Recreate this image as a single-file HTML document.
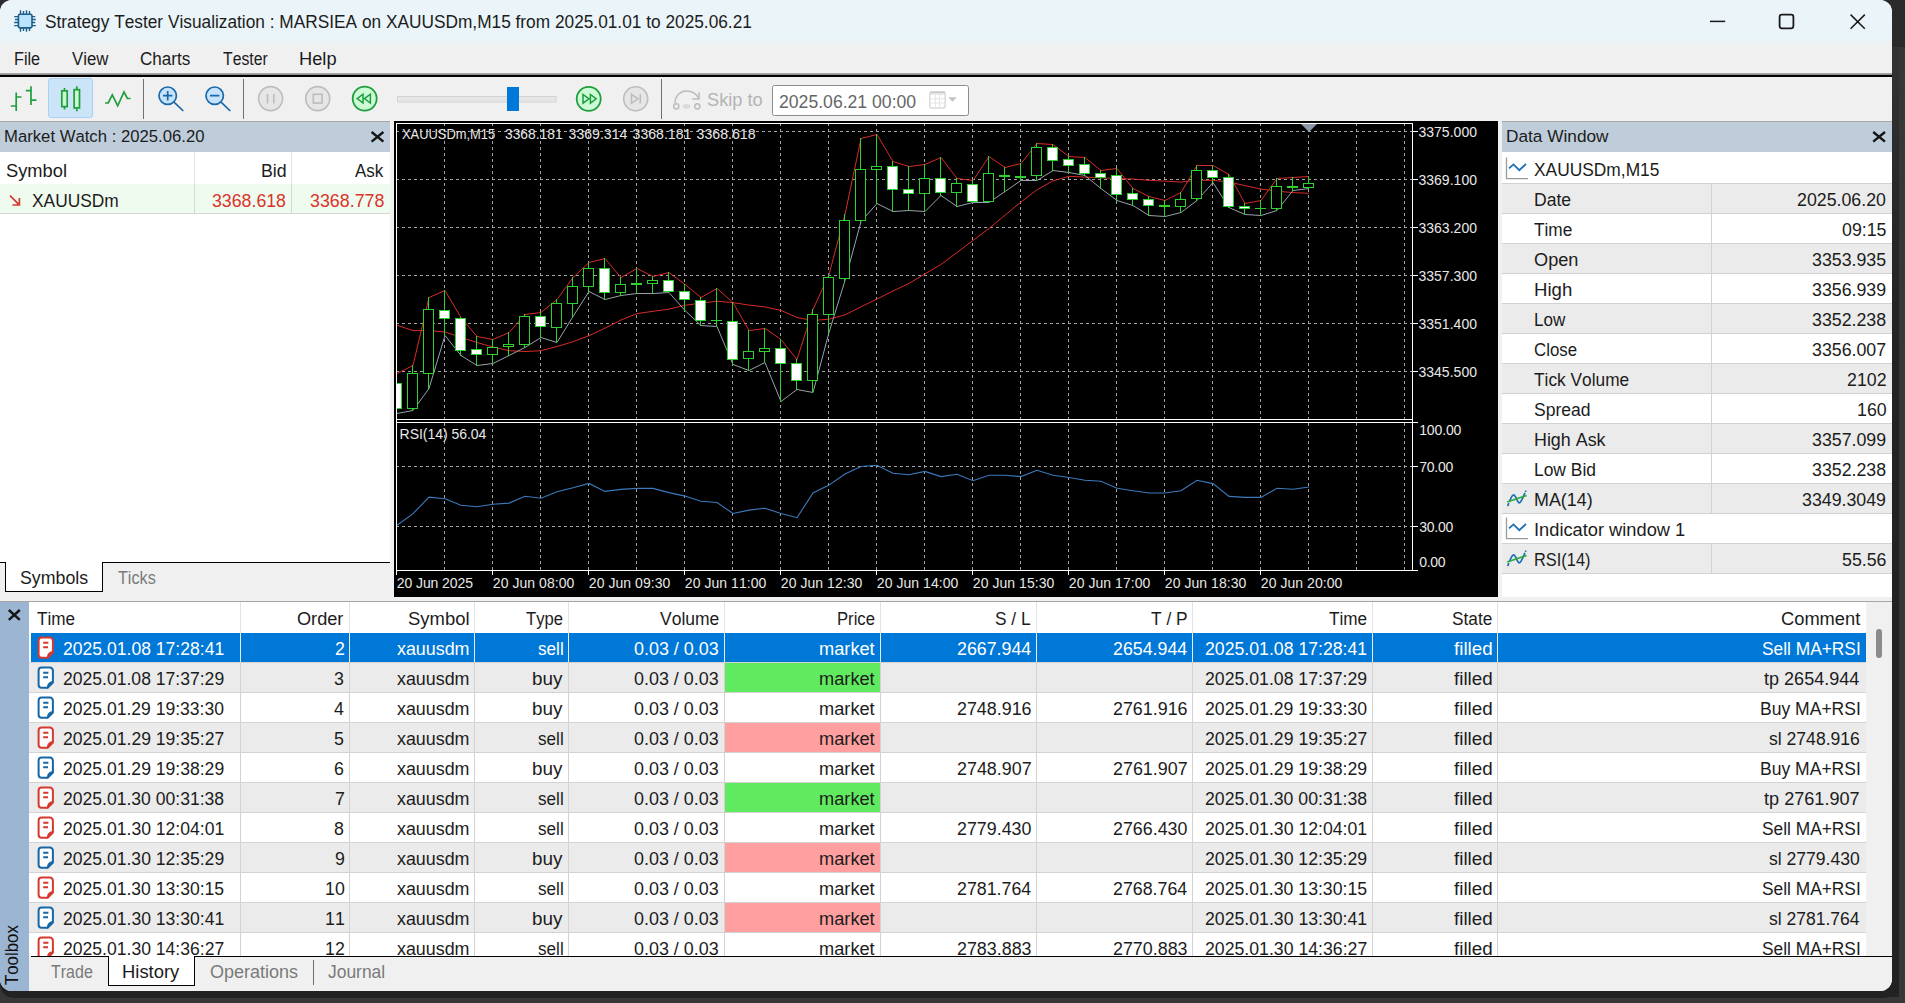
<!DOCTYPE html>
<html lang="en"><head><meta charset="utf-8"><title>Strategy Tester Visualization</title><style>
html,body{margin:0;padding:0}
body{width:1905px;height:1003px;overflow:hidden;background:#373737;position:relative;font-family:"Liberation Sans",sans-serif;font-kerning:none}
.b{position:absolute}
.t{position:absolute;white-space:nowrap;line-height:1;transform-origin:0 0;color:#111}
svg{position:absolute;overflow:visible}
#win{position:absolute;left:0;top:0;width:1892px;height:991px;background:#f0f0f0;border-radius:12px;overflow:hidden}
</style></head><body>
<div class="b" style="left:1880px;top:0px;width:25px;height:47px;background:#2b2b2b;"></div>
<div class="b" style="left:0px;top:47px;width:1905px;height:956px;background:#373737;"></div>
<div class="b" style="left:1885px;top:47px;width:14px;height:950px;background:linear-gradient(#343434 0,#2a2a2a 120px,#232323 300px,#222 100%);"></div>
<div class="b" style="left:0px;top:975px;width:1899px;height:23px;background:#222;border-radius:0 0 16px 14px;"></div>
<div class="b" style="left:0px;top:0px;width:16px;height:16px;background:#2b2b30;"></div>
<div id="win">
<div class="b" style="left:0px;top:0px;width:1892px;height:50px;background:linear-gradient(#ebf4f9 0,#e9f4f9 39px,#f0f0f0 46px);"></div>
<svg style="left:12px;top:8px" width="26" height="26" viewBox="12 8 26 26">
<g stroke="#1b5f8c" stroke-width="1.4" fill="none">
<path d="M20.5 10.2V14M23.5 11V14M26.5 10.2V14M29.5 11V14M20.5 28V31.8M23.5 28V31M26.5 28V31.8M29.5 28V31"/>
<path d="M14.2 16.6H18M15 19.5H18M14.2 22.5H18M14.2 25.6H18M32 16.6H35.2M32 19.5H35.8M32 22.5H35.2M32 25.6H35.8"/>
<rect x="18.4" y="14.3" width="13.6" height="13.6" rx="1.6" fill="#b9e4fb" stroke-width="1.6"/></g></svg>
<span class="t" style="left:45.01px;top:13px;font-size:18.3px;transform:scaleX(0.9452);color:#1c1c1c;">Strategy Tester Visualization : MARSIEA on XAUUSDm,M15 from 2025.01.01 to 2025.06.21</span>
<svg style="left:1700px;top:8px" width="180" height="28" viewBox="1700 8 180 28">
<g stroke="#1a1a1a" stroke-width="1.5" fill="none">
<path d="M1710 21.4H1725.2"/>
<rect x="1779.6" y="14.7" width="13.8" height="13.6" rx="2.2" stroke-width="1.8"/>
<path d="M1850.6 14.6L1864.8 28.8M1864.8 14.6L1850.6 28.8"/></g></svg>
<span class="t" style="left:14.07px;top:50px;font-size:18.3px;transform:scaleX(0.8869);color:#1c1c1c;">File</span>
<span class="t" style="left:72.33px;top:50px;font-size:18.3px;transform:scaleX(0.9185);color:#1c1c1c;">View</span>
<span class="t" style="left:140.23px;top:50px;font-size:18.3px;transform:scaleX(0.9348);color:#1c1c1c;">Charts</span>
<span class="t" style="left:223.25px;top:50px;font-size:18.3px;transform:scaleX(0.8622);color:#1c1c1c;">Tester</span>
<span class="t" style="left:299.20px;top:50px;font-size:18.3px;transform:scaleX(0.9981);color:#1c1c1c;">Help</span>
<div class="b" style="left:0px;top:73px;width:1892px;height:1px;background:#a8a8a8;"></div>
<div class="b" style="left:0px;top:74px;width:1892px;height:1px;background:#8c8c8c;"></div>
<div class="b" style="left:0px;top:75px;width:1892px;height:2px;background:#000;"></div>
<div class="b" style="left:48px;top:78px;width:45px;height:40px;background:#cce4f7;border:1px solid #a9d1f5;border-radius:3px;box-sizing:border-box;"></div>
<svg style="left:0;top:77px" width="1000" height="44" viewBox="0 77 1000 44">
<g fill="none" stroke="#1f9e3d" stroke-width="1.7">
<path d="M16.2 92.4V111M16.2 97H21.5M10.8 106H16.2M31 86.2V105M25.8 90.7H31M31 100.1H36.4"/>
<path d="M64.5 88V90.4M64.5 106.8V109.5M76.8 86.2V89.3M76.8 108.2V111.3"/>
<rect x="61.8" y="90.8" width="5.4" height="15.8" fill="#c9f7cf"/>
<rect x="74.1" y="89.7" width="5.4" height="18.2" fill="#c9f7cf"/>
<path d="M105 103H108.2L112.3 94.9L117.7 105.8L124 92L127.4 98.5H130.5" stroke-linejoin="miter"/>
</g>
<g stroke="#707070" stroke-width="1" shape-rendering="crispEdges"><path d="M143.5 79V119M243.5 79V119M661.5 79V119"/></g>
<g fill="none" stroke="#1b69a8" stroke-width="1.7">
<circle cx="167.7" cy="95.7" r="8.7" fill="#c6e3fb"/><path d="M163 95.7H172.4M167.7 91V100.4M174.3 102.3L183.3 111"/>
<circle cx="214.7" cy="95.7" r="8.7" fill="#c6e3fb"/><path d="M210 95.7H219.4M221.3 102.3L230.3 111"/>
</g>
<g fill="#e6e6e6" stroke="#bdbdbd" stroke-width="1.6">
<circle cx="270.6" cy="98.6" r="12"/><circle cx="317.7" cy="98.6" r="12"/><circle cx="635.7" cy="98.8" r="12"/>
<path d="M267.5 94V103.4M273.8 94V103.4" fill="none"/>
<rect x="313.3" y="94.3" width="8.8" height="8.8" fill="none"/>
<path d="M631.5 94.3L638 98.8L631.5 103.3ZM640.3 94V103.6" fill="none"/>
</g>
<g fill="#ccfbd6" stroke="#1f9e3d" stroke-width="1.8">
<circle cx="364.7" cy="98.6" r="12"/><circle cx="588.7" cy="98.8" r="12"/>
<path d="M357.2 98.6L363 94.2V103ZM364.4 98.6L370.4 94.2V103Z" fill="none" stroke-width="1.5"/>
<path d="M596.2 98.8L590.4 94.4V103.2ZM589 98.8L583 94.4V103.2Z" fill="none" stroke-width="1.5"/>
</g>
<rect x="397.5" y="96.5" width="158.5" height="5.5" fill="#e6e6e6" stroke="#d3d3d3" stroke-width="1"/>
<rect x="507" y="87" width="12" height="24" fill="#0078d7"/>
<g fill="none" stroke="#bcbcbc" stroke-width="1.5">
<path d="M675 103.2C675 95.4 680.6 91 686.5 91C692 91 696.6 94 698.7 98.5"/><path d="M699.1 92.2V98.9H692.2"/>
<circle cx="676.3" cy="106.3" r="2.6"/><circle cx="697.3" cy="106.3" r="2.6"/>
</g>
<ellipse cx="686.5" cy="106.3" rx="3.8" ry="2.4" fill="#dadada"/>
<rect x="772.5" y="85.5" width="196" height="30" rx="2" fill="#fff" stroke="#8c8c8c" stroke-width="1"/>
<rect x="929.9" y="91.9" width="15.2" height="16.1" rx="1" fill="#fff" stroke="#c6c6c6" stroke-width="1"/>
<path d="M930 92.6H945" stroke="#c6c6c6" stroke-width="1.6" fill="none"/>
<path d="M935.3 94.4V107.6M939.6 94.4V107.6M930.4 94.4H944.6M930.4 98.8H944.6M930.4 103H944.6" stroke="#e4e4e4" stroke-width="1" fill="none"/>
<path d="M948.2 97.2L956.8 97.2L952.5 101.7Z" fill="#c2c2c2"/>
</svg>
<span class="t" style="left:706.97px;top:91px;font-size:18.3px;transform:scaleX(0.9973);color:#b4b4b4;">Skip to</span>
<span class="t" style="left:778.81px;top:93px;font-size:18.3px;transform:scaleX(0.9636);color:#666;">2025.06.21 00:00</span>
<div class="b" style="left:0px;top:121px;width:390px;height:31px;background:#bfcddb;border-top:1px solid #a8a8a8;box-sizing:border-box;"></div>
<span class="t" style="left:3.83px;top:129px;font-size:16.8px;transform:scaleX(0.9951);color:#1c1c1c;">Market Watch : 2025.06.20</span>
<svg style="left:370px;top:130px" width="16" height="14" viewBox="370 130 16 14"><path d="M371.6 132L383.4 141.6M383.4 132L371.6 141.6" stroke="#151515" stroke-width="2.4" fill="none"/></svg>
<div class="b" style="left:0px;top:152px;width:390px;height:410px;background:#fff;"></div>
<div class="b" style="left:194px;top:152px;width:1px;height:62px;background:#e2e2e2;"></div>
<div class="b" style="left:291px;top:152px;width:1px;height:62px;background:#e2e2e2;"></div>
<div class="b" style="left:0px;top:184px;width:390px;height:30px;background:#f0fbf0;"></div>
<div class="b" style="left:194px;top:184px;width:1px;height:30px;background:#d0dcd0;"></div>
<div class="b" style="left:291px;top:184px;width:1px;height:30px;background:#d0dcd0;"></div>
<div class="b" style="left:0px;top:213px;width:390px;height:1px;background:#d6d6d6;"></div>
<span class="t" style="left:5.87px;top:162px;font-size:18.3px;transform:scaleX(1.0006);color:#1c1c1c;">Symbol</span>
<span class="t" style="left:260.54px;top:162px;font-size:18.3px;transform:scaleX(0.9719);color:#1c1c1c;">Bid</span>
<span class="t" style="left:355.47px;top:162px;font-size:18.3px;transform:scaleX(0.9280);color:#1c1c1c;">Ask</span>
<svg style="left:8px;top:193px" width="14" height="14" viewBox="8 193 14 14"><path d="M10 195.6L19 204.6M12.4 205H19.4V198" stroke="#d8392e" stroke-width="1.7" fill="none"/></svg>
<span class="t" style="left:31.71px;top:192px;font-size:18.3px;transform:scaleX(0.9489);color:#1c1c1c;">XAUUSDm</span>
<span class="t" style="left:211.82px;top:192px;font-size:18.3px;transform:scaleX(0.9701);color:#d8342a;">3368.618</span>
<span class="t" style="left:310.12px;top:192px;font-size:18.3px;transform:scaleX(0.9755);color:#d8342a;">3368.778</span>
<div class="b" style="left:0px;top:562px;width:390px;height:35px;background:#f0f0f0;"></div>
<div class="b" style="left:103px;top:562px;width:287px;height:1px;background:#000;"></div>
<div class="b" style="left:0px;top:562px;width:5px;height:1px;background:#000;"></div>
<div class="b" style="left:5px;top:562px;width:98px;height:30px;background:#fff;border:1px solid #000;border-top:none;box-sizing:border-box;"></div>
<span class="t" style="left:19.59px;top:569px;font-size:18.3px;transform:scaleX(0.9712);color:#1c1c1c;">Symbols</span>
<span class="t" style="left:118.24px;top:569px;font-size:18.3px;transform:scaleX(0.8842);color:#7a7a7a;">Ticks</span>
<div class="b" style="left:1502px;top:121px;width:390px;height:31px;background:#bfcddb;border-top:1px solid #a8a8a8;box-sizing:border-box;"></div>
<span class="t" style="left:1506.08px;top:129px;font-size:16.8px;transform:scaleX(1.0277);color:#1c1c1c;">Data Window</span>
<svg style="left:1872px;top:130px" width="16" height="14" viewBox="1872 130 16 14"><path d="M1873.2 132L1885 141.6M1885 132L1873.2 141.6" stroke="#151515" stroke-width="2.4" fill="none"/></svg>
<div class="b" style="left:1502px;top:152px;width:390px;height:445px;background:#fff;"></div>
<div class="b" style="left:1502px;top:183px;width:390px;height:1px;background:#d2d2d2;"></div>
<span class="t" style="left:1534.20px;top:161px;font-size:18.3px;transform:scaleX(0.9496);color:#1c1c1c;">XAUUSDm,M15</span>
<svg style="left:1504px;top:156px" width="26" height="26" viewBox="0 0 26 26"><path d="M2.5 1.6V22.7H24" stroke="#9a9a9a" stroke-width="1.3" fill="none"/><path d="M5 12.4L9.5 8.4L15.3 14.2L22 7.9" stroke="#1d6fb4" stroke-width="1.8" fill="none"/></svg>
<div class="b" style="left:1502px;top:184px;width:390px;height:29px;background:#ebebeb;"></div>
<div class="b" style="left:1502px;top:213px;width:390px;height:1px;background:#d2d2d2;"></div>
<div class="b" style="left:1711px;top:184px;width:1px;height:29px;background:#d2d2d2;"></div>
<span class="t" style="left:1534.20px;top:191px;font-size:18.3px;transform:scaleX(0.9619);color:#1c1c1c;">Date</span>
<span class="t" style="left:1797.17px;top:191px;font-size:18.3px;transform:scaleX(0.9720);color:#1c1c1c;">2025.06.20</span>
<div class="b" style="left:1502px;top:243px;width:390px;height:1px;background:#d2d2d2;"></div>
<div class="b" style="left:1711px;top:214px;width:1px;height:29px;background:#d2d2d2;"></div>
<span class="t" style="left:1534.20px;top:221px;font-size:18.3px;transform:scaleX(0.9435);color:#1c1c1c;">Time</span>
<span class="t" style="left:1841.73px;top:221px;font-size:18.3px;transform:scaleX(0.9720);color:#1c1c1c;">09:15</span>
<div class="b" style="left:1502px;top:244px;width:390px;height:29px;background:#ebebeb;"></div>
<div class="b" style="left:1502px;top:273px;width:390px;height:1px;background:#d2d2d2;"></div>
<div class="b" style="left:1711px;top:244px;width:1px;height:29px;background:#d2d2d2;"></div>
<span class="t" style="left:1534.20px;top:251px;font-size:18.3px;transform:scaleX(0.9936);color:#1c1c1c;">Open</span>
<span class="t" style="left:1812.06px;top:251px;font-size:18.3px;transform:scaleX(0.9720);color:#1c1c1c;">3353.935</span>
<div class="b" style="left:1502px;top:303px;width:390px;height:1px;background:#d2d2d2;"></div>
<div class="b" style="left:1711px;top:274px;width:1px;height:29px;background:#d2d2d2;"></div>
<span class="t" style="left:1534.20px;top:281px;font-size:18.3px;transform:scaleX(1.0179);color:#1c1c1c;">High</span>
<span class="t" style="left:1812.15px;top:281px;font-size:18.3px;transform:scaleX(0.9720);color:#1c1c1c;">3356.939</span>
<div class="b" style="left:1502px;top:304px;width:390px;height:29px;background:#ebebeb;"></div>
<div class="b" style="left:1502px;top:333px;width:390px;height:1px;background:#d2d2d2;"></div>
<div class="b" style="left:1711px;top:304px;width:1px;height:29px;background:#d2d2d2;"></div>
<span class="t" style="left:1534.20px;top:311px;font-size:18.3px;transform:scaleX(0.9341);color:#1c1c1c;">Low</span>
<span class="t" style="left:1812.08px;top:311px;font-size:18.3px;transform:scaleX(0.9720);color:#1c1c1c;">3352.238</span>
<div class="b" style="left:1502px;top:363px;width:390px;height:1px;background:#d2d2d2;"></div>
<div class="b" style="left:1711px;top:334px;width:1px;height:29px;background:#d2d2d2;"></div>
<span class="t" style="left:1534.20px;top:341px;font-size:18.3px;transform:scaleX(0.9201);color:#1c1c1c;">Close</span>
<span class="t" style="left:1812.20px;top:341px;font-size:18.3px;transform:scaleX(0.9720);color:#1c1c1c;">3356.007</span>
<div class="b" style="left:1502px;top:364px;width:390px;height:29px;background:#ebebeb;"></div>
<div class="b" style="left:1502px;top:393px;width:390px;height:1px;background:#d2d2d2;"></div>
<div class="b" style="left:1711px;top:364px;width:1px;height:29px;background:#d2d2d2;"></div>
<span class="t" style="left:1534.20px;top:371px;font-size:18.3px;transform:scaleX(0.9463);color:#1c1c1c;">Tick Volume</span>
<span class="t" style="left:1846.82px;top:371px;font-size:18.3px;transform:scaleX(0.9720);color:#1c1c1c;">2102</span>
<div class="b" style="left:1502px;top:423px;width:390px;height:1px;background:#d2d2d2;"></div>
<div class="b" style="left:1711px;top:394px;width:1px;height:29px;background:#d2d2d2;"></div>
<span class="t" style="left:1534.20px;top:401px;font-size:18.3px;transform:scaleX(0.9597);color:#1c1c1c;">Spread</span>
<span class="t" style="left:1856.52px;top:401px;font-size:18.3px;transform:scaleX(0.9720);color:#1c1c1c;">160</span>
<div class="b" style="left:1502px;top:424px;width:390px;height:29px;background:#ebebeb;"></div>
<div class="b" style="left:1502px;top:453px;width:390px;height:1px;background:#d2d2d2;"></div>
<div class="b" style="left:1711px;top:424px;width:1px;height:29px;background:#d2d2d2;"></div>
<span class="t" style="left:1534.20px;top:431px;font-size:18.3px;transform:scaleX(0.9774);color:#1c1c1c;">High Ask</span>
<span class="t" style="left:1812.15px;top:431px;font-size:18.3px;transform:scaleX(0.9720);color:#1c1c1c;">3357.099</span>
<div class="b" style="left:1502px;top:483px;width:390px;height:1px;background:#d2d2d2;"></div>
<div class="b" style="left:1711px;top:454px;width:1px;height:29px;background:#d2d2d2;"></div>
<span class="t" style="left:1534.20px;top:461px;font-size:18.3px;transform:scaleX(0.9527);color:#1c1c1c;">Low Bid</span>
<span class="t" style="left:1812.08px;top:461px;font-size:18.3px;transform:scaleX(0.9720);color:#1c1c1c;">3352.238</span>
<div class="b" style="left:1502px;top:484px;width:390px;height:29px;background:#ebebeb;"></div>
<div class="b" style="left:1502px;top:513px;width:390px;height:1px;background:#d2d2d2;"></div>
<div class="b" style="left:1711px;top:484px;width:1px;height:29px;background:#d2d2d2;"></div>
<span class="t" style="left:1534.20px;top:491px;font-size:18.3px;transform:scaleX(0.9786);color:#1c1c1c;">MA(14)</span>
<span class="t" style="left:1802.26px;top:491px;font-size:18.3px;transform:scaleX(0.9720);color:#1c1c1c;">3349.3049</span>
<svg style="left:1506px;top:488px" width="24" height="22" viewBox="0 0 24 22"><path d="M1.6 18C3.6 14 5.4 6.8 7.6 6.8C10 6.8 11 14.8 13.3 14.8C15.6 14.8 17.6 7 20 2.7" stroke="#1d6fb4" stroke-width="1.7" fill="none" stroke-dasharray="3.2 1.2 30 1.2 3.2"/><path d="M1.2 14.1L20.6 7.4" stroke="#2dab3f" stroke-width="1.6" fill="none"/></svg>
<div class="b" style="left:1502px;top:543px;width:390px;height:1px;background:#d2d2d2;"></div>
<span class="t" style="left:1534.20px;top:521px;font-size:18.3px;transform:scaleX(0.9989);color:#1c1c1c;">Indicator window 1</span>
<svg style="left:1504px;top:516px" width="26" height="26" viewBox="0 0 26 26"><path d="M2.5 1.6V22.7H24" stroke="#9a9a9a" stroke-width="1.3" fill="none"/><path d="M5 12.4L9.5 8.4L15.3 14.2L22 7.9" stroke="#1d6fb4" stroke-width="1.8" fill="none"/></svg>
<div class="b" style="left:1502px;top:544px;width:390px;height:29px;background:#ebebeb;"></div>
<div class="b" style="left:1502px;top:573px;width:390px;height:1px;background:#d2d2d2;"></div>
<div class="b" style="left:1711px;top:544px;width:1px;height:29px;background:#d2d2d2;"></div>
<span class="t" style="left:1534.20px;top:551px;font-size:18.3px;transform:scaleX(0.8964);color:#1c1c1c;">RSI(14)</span>
<span class="t" style="left:1841.77px;top:551px;font-size:18.3px;transform:scaleX(0.9720);color:#1c1c1c;">55.56</span>
<svg style="left:1506px;top:548px" width="24" height="22" viewBox="0 0 24 22"><path d="M1.6 18C3.6 14 5.4 6.8 7.6 6.8C10 6.8 11 14.8 13.3 14.8C15.6 14.8 17.6 7 20 2.7" stroke="#1d6fb4" stroke-width="1.7" fill="none" stroke-dasharray="3.2 1.2 30 1.2 3.2"/><path d="M1.2 14.1L20.6 7.4" stroke="#2dab3f" stroke-width="1.6" fill="none"/></svg>
<svg style="left:394px;top:121px" width="1104" height="476" viewBox="394 121 1104 476"><rect x="394" y="121" width="1104" height="476" fill="#000"/><path d="M444.5 123V419M444.5 423V570M492.5 123V419M492.5 423V570M540.5 123V419M540.5 423V570M588.5 123V419M588.5 423V570M636.5 123V419M636.5 423V570M684.5 123V419M684.5 423V570M732.5 123V419M732.5 423V570M780.5 123V419M780.5 423V570M828.5 123V419M828.5 423V570M876.5 123V419M876.5 423V570M924.5 123V419M924.5 423V570M972.5 123V419M972.5 423V570M1020.5 123V419M1020.5 423V570M1068.5 123V419M1068.5 423V570M1116.5 123V419M1116.5 423V570M1164.5 123V419M1164.5 423V570M1212.5 123V419M1212.5 423V570M1260.5 123V419M1260.5 423V570M1308.5 123V419M1308.5 423V570M1356.5 123V419M1356.5 423V570M1404.5 123V419M1404.5 423V570M396 131.5H1412M396 179.5H1412M396 227.5H1412M396 275.5H1412M396 323.5H1412M396 371.5H1412M396 466.5H1412M396 526.5H1412" stroke="#a2a2a2" stroke-width="1" stroke-dasharray="3 3" fill="none" shape-rendering="crispEdges"/><svg x="397" y="124" width="1015" height="295" viewBox="397 124 1015 295" style="overflow:hidden;position:static"><g fill="none" stroke-width="1"><polyline points="397.0,325.3 413.0,330.6 429.0,330.6 445.0,332.0 461.0,337.3 477.0,342.5 493.0,347.0 509.0,350.7 525.0,351.5 541.0,350.7 557.0,346.5 573.0,341.7 589.0,335.7 605.0,328.2 621.0,320.0 637.0,313.6 653.0,311.3 669.0,309.1 685.0,305.3 701.0,303.1 717.0,301.2 733.0,302.6 749.0,305.1 765.0,306.9 781.0,310.4 797.0,317.5 813.0,320.5 829.0,319.2 845.0,314.9 861.0,306.8 877.0,299.0 893.0,291.0 909.0,283.4 925.0,273.9 941.0,264.5 957.0,252.5 973.0,240.5 989.0,228.4 1005.0,215.2 1021.0,202.0 1037.0,189.8 1053.0,180.8 1069.0,176.3 1085.0,177.1 1101.0,177.8 1117.0,178.6 1133.0,179.0 1149.0,180.3 1165.0,181.1 1181.0,182.1 1197.0,180.3 1213.0,180.3 1229.0,182.1 1245.0,185.6 1261.0,189.1 1277.0,191.2 1293.0,192.6 1309.0,193.3" stroke="#d92a2a"/><polyline points="397.0,413.5 413.0,410.5 429.0,388.5 445.0,335.5 461.0,355.5 477.0,365.5 493.0,363.5 509.0,355.5 525.0,347.5 541.0,337.5 557.0,342.5 573.0,316.5 589.0,291.5 605.0,299.5 621.0,295.5 637.0,293.5 653.0,293.5 669.0,292.5 685.0,310.5 701.0,325.5 717.0,326.5 733.0,364.5 749.0,370.5 765.0,362.5 781.0,401.5 797.0,389.5 813.0,392.5 829.0,332.5 845.0,280.5 861.0,221.5 877.0,203.5 893.0,211.5 909.0,210.5 925.0,211.5 941.0,195.5 957.0,206.5 973.0,202.5 989.0,202.5 1005.0,191.5 1021.0,180.5 1037.0,180.5 1053.0,170.5 1069.0,172.5 1085.0,175.5 1101.0,188.5 1117.0,200.5 1133.0,205.5 1149.0,215.5 1165.0,216.5 1181.0,212.5 1197.0,200.5 1213.0,182.5 1229.0,207.5 1245.0,214.5 1261.0,215.5 1277.0,210.5 1293.0,190.5 1309.0,188.5" stroke="#98a2ac"/><polyline points="397.0,373.5 413.0,365.5 429.0,297.5 445.0,290.5 461.0,317.5 477.0,336.5 493.0,339.5 509.0,332.5 525.0,314.5 541.0,312.5 557.0,299.5 573.0,277.5 589.0,262.5 605.0,258.5 621.0,277.5 637.0,268.5 653.0,276.5 669.0,272.5 685.0,284.5 701.0,297.5 717.0,288.5 733.0,302.5 749.0,330.5 765.0,328.5 781.0,339.5 797.0,359.5 813.0,309.5 829.0,274.5 845.0,214.5 861.0,138.5 877.0,134.5 893.0,161.5 909.0,166.5 925.0,164.5 941.0,157.5 957.0,178.5 973.0,180.5 989.0,156.5 1005.0,167.5 1021.0,163.5 1037.0,143.5 1053.0,144.5 1069.0,156.5 1085.0,157.5 1101.0,170.5 1117.0,168.5 1133.0,188.5 1149.0,196.5 1165.0,200.5 1181.0,192.5 1197.0,165.5 1213.0,165.5 1229.0,174.5 1245.0,203.5 1261.0,200.5 1277.0,178.5 1293.0,177.5 1309.0,176.5" stroke="#d92a2a"/></g><g fill="none" stroke-width="1" shape-rendering="crispEdges"><path d="M396.5 373V383M396.5 409V414M412.5 365V373M412.5 409V411M428.5 297V309M428.5 374V389M444.5 290V310M444.5 319V336M460.5 317V318M460.5 351V356M476.5 336V349M476.5 355V366M492.5 339V347M492.5 355V364M508.5 332V344M508.5 347V356M524.5 314V316M524.5 345V348M540.5 312V316M540.5 327V338M556.5 299V303M556.5 328V343M572.5 277V286M572.5 304V317M588.5 262V268M588.5 287V292M604.5 258V268M604.5 293V300M620.5 277V284M620.5 293V296M636.5 268V294M631 283.5H642M631 284.5H642M652.5 276V280M652.5 284V294M668.5 272V280M668.5 292V293M684.5 284V291M684.5 300V311M700.5 297V300M700.5 321V326M716.5 288V327M711 320.5H722M732.5 302V321M732.5 360V365M748.5 330V351M748.5 359V371M764.5 328V348M764.5 352V363M780.5 339V348M780.5 364V402M796.5 359V363M796.5 381V390M812.5 309V314M812.5 381V393M828.5 274V277M828.5 315V333M844.5 214V220M844.5 279V281M860.5 138V169M860.5 221V222M876.5 134V166M876.5 170V204M892.5 161V166M892.5 190V212M908.5 166V189M908.5 194V211M924.5 164V178M924.5 194V212M940.5 157V178M940.5 193V196M956.5 178V183M956.5 193V207M972.5 180V184M972.5 202V203M988.5 156V173M988.5 202V203M1004.5 167V192M999 175.5H1010M999 176.5H1010M1020.5 163V181M1015 176.5H1026M1015 177.5H1026M1036.5 143V147M1036.5 176V181M1052.5 144V147M1052.5 161V171M1068.5 156V159M1068.5 166V173M1084.5 157V164M1084.5 174V176M1100.5 170V173M1100.5 178V189M1116.5 168V175M1116.5 195V201M1132.5 188V193M1132.5 200V206M1148.5 196V199M1148.5 206V216M1164.5 200V217M1159 205.5H1170M1159 206.5H1170M1180.5 192V199M1180.5 207V213M1196.5 165V170M1196.5 199V201M1212.5 165V170M1212.5 178V183M1228.5 174V177M1228.5 207V208M1244.5 203V206M1244.5 209V215M1260.5 200V216M1255 208.5H1266M1276.5 178V186M1276.5 209V211M1292.5 177V191M1287 186.5H1298M1287 187.5H1298M1308.5 176V183M1308.5 188V189" stroke="#2ed22e"/><g stroke="#2ed22e" fill="#000"><rect x="407.5" y="373.5" width="10" height="35"/><rect x="423.5" y="309.5" width="10" height="64"/><rect x="487.5" y="347.5" width="10" height="7"/><rect x="503.5" y="344.5" width="10" height="2"/><rect x="519.5" y="316.5" width="10" height="28"/><rect x="551.5" y="303.5" width="10" height="24"/><rect x="567.5" y="286.5" width="10" height="17"/><rect x="583.5" y="268.5" width="10" height="18"/><rect x="615.5" y="284.5" width="10" height="8"/><rect x="647.5" y="280.5" width="10" height="3"/><rect x="743.5" y="351.5" width="10" height="7"/><rect x="759.5" y="348.5" width="10" height="3"/><rect x="807.5" y="314.5" width="10" height="66"/><rect x="823.5" y="277.5" width="10" height="37"/><rect x="839.5" y="220.5" width="10" height="58"/><rect x="855.5" y="169.5" width="10" height="51"/><rect x="871.5" y="166.5" width="10" height="3"/><rect x="919.5" y="178.5" width="10" height="15"/><rect x="951.5" y="183.5" width="10" height="9"/><rect x="983.5" y="173.5" width="10" height="28"/><rect x="1031.5" y="147.5" width="10" height="28"/><rect x="1175.5" y="199.5" width="10" height="7"/><rect x="1191.5" y="170.5" width="10" height="28"/><rect x="1271.5" y="186.5" width="10" height="22"/><rect x="1303.5" y="183.5" width="10" height="4"/></g><g stroke="#2ed22e" fill="#fff"><rect x="391.5" y="383.5" width="10" height="25"/><rect x="439.5" y="310.5" width="10" height="8"/><rect x="455.5" y="318.5" width="10" height="32"/><rect x="471.5" y="349.5" width="10" height="5"/><rect x="535.5" y="316.5" width="10" height="10"/><rect x="599.5" y="268.5" width="10" height="24"/><rect x="663.5" y="280.5" width="10" height="11"/><rect x="679.5" y="291.5" width="10" height="8"/><rect x="695.5" y="300.5" width="10" height="20"/><rect x="727.5" y="321.5" width="10" height="38"/><rect x="775.5" y="348.5" width="10" height="15"/><rect x="791.5" y="363.5" width="10" height="17"/><rect x="887.5" y="166.5" width="10" height="23"/><rect x="903.5" y="189.5" width="10" height="4"/><rect x="935.5" y="178.5" width="10" height="14"/><rect x="967.5" y="184.5" width="10" height="17"/><rect x="1047.5" y="147.5" width="10" height="13"/><rect x="1063.5" y="159.5" width="10" height="6"/><rect x="1079.5" y="164.5" width="10" height="9"/><rect x="1095.5" y="173.5" width="10" height="4"/><rect x="1111.5" y="175.5" width="10" height="19"/><rect x="1127.5" y="193.5" width="10" height="6"/><rect x="1143.5" y="199.5" width="10" height="6"/><rect x="1207.5" y="170.5" width="10" height="7"/><rect x="1223.5" y="177.5" width="10" height="29"/><rect x="1239.5" y="206.5" width="10" height="2"/></g></g></svg><svg x="397" y="423" width="1015" height="147" viewBox="397 423 1015 147" style="overflow:hidden;position:static"><polyline points="397.0,525.3 413.0,513.7 429.0,497.1 445.0,498.7 461.0,505.3 477.0,506.7 493.0,504.3 509.0,503.1 525.0,496.3 541.0,498.3 557.0,491.8 573.0,487.8 589.0,483.4 605.0,491.4 621.0,489.4 637.0,488.4 653.0,488.4 669.0,492.6 685.0,496.1 701.0,501.2 717.0,502.5 733.0,513.5 749.0,510.1 765.0,508.2 781.0,513.5 797.0,517.7 813.0,493.0 829.0,485.1 845.0,474.1 861.0,466.5 877.0,465.2 893.0,473.3 909.0,474.7 925.0,471.4 941.0,476.6 957.0,474.3 973.0,480.7 989.0,475.2 1005.0,475.2 1021.0,476.6 1037.0,470.3 1053.0,475.2 1069.0,477.5 1085.0,480.3 1101.0,481.3 1117.0,488.3 1133.0,490.8 1149.0,493.0 1165.0,493.0 1181.0,490.8 1197.0,480.3 1213.0,483.6 1229.0,496.4 1245.0,497.4 1261.0,497.4 1277.0,488.3 1293.0,489.2 1309.0,487.0" fill="none" stroke="#3b7abc" stroke-width="1.1"/></svg><path d="M1301 124H1317L1309 132Z" fill="#8a97a8"/><path d="M396.5 123V571M1412.5 123V571M396 123.5H1413M396 419.5H1413M396 422.5H1418M396 570.5H1418M1413 131.5H1418M1413 179.5H1418M1413 227.5H1418M1413 275.5H1418M1413 323.5H1418M1413 371.5H1418M1413 466.5H1418M1413 526.5H1418M396.5 571V575M492.5 571V575M588.5 571V575M684.5 571V575M780.5 571V575M876.5 571V575M972.5 571V575M1068.5 571V575M1164.5 571V575M1260.5 571V575" stroke="#fff" stroke-width="1" fill="none" shape-rendering="crispEdges"/><g fill="#e8e8e8" font-family="'Liberation Sans',sans-serif" font-size="14px"><text x="402" y="139" textLength="93.2" lengthAdjust="spacingAndGlyphs">XAUUSDm,M15</text><text x="505" y="139" textLength="57.6" lengthAdjust="spacingAndGlyphs">3368.181</text><text x="568.6" y="139" textLength="58.7" lengthAdjust="spacingAndGlyphs">3369.314</text><text x="632.6" y="139" textLength="58.7" lengthAdjust="spacingAndGlyphs">3368.181</text><text x="696.5" y="139" textLength="59.1" lengthAdjust="spacingAndGlyphs">3368.618</text><text x="399.6" y="439.3" textLength="86.7">RSI(14) 56.04</text><text x="1418.4" y="136.6" textLength="58.6">3375.000</text><text x="1418.4" y="184.6" textLength="58.6">3369.100</text><text x="1418.4" y="232.6" textLength="58.6">3363.200</text><text x="1418.4" y="280.6" textLength="58.6">3357.300</text><text x="1418.4" y="328.6" textLength="58.6">3351.400</text><text x="1418.4" y="376.6" textLength="58.6">3345.500</text><text x="1419.2" y="435.1" textLength="42.2">100.00</text><text x="1419.2" y="471.6" textLength="34.2">70.00</text><text x="1419.2" y="531.7" textLength="34.2">30.00</text><text x="1419.2" y="566.7" textLength="26.4">0.00</text><text x="396.8" y="587.6" textLength="76.2">20 Jun 2025</text><text x="492.8" y="587.6" textLength="81.6">20 Jun 08:00</text><text x="588.8" y="587.6" textLength="81.6">20 Jun 09:30</text><text x="684.8" y="587.6" textLength="81.6">20 Jun 11:00</text><text x="780.8" y="587.6" textLength="81.6">20 Jun 12:30</text><text x="876.8" y="587.6" textLength="81.6">20 Jun 14:00</text><text x="972.8" y="587.6" textLength="81.6">20 Jun 15:30</text><text x="1068.8" y="587.6" textLength="81.6">20 Jun 17:00</text><text x="1164.8" y="587.6" textLength="81.6">20 Jun 18:30</text><text x="1260.8" y="587.6" textLength="81.6">20 Jun 20:00</text></g></svg>
<div class="b" style="left:0px;top:601px;width:1892px;height:1px;background:#a6a6a6;"></div>
<div class="b" style="left:0px;top:602px;width:29px;height:389px;background:#9bb5d3;"></div>
<div class="b" style="left:29px;top:602px;width:1837px;height:355px;background:#fff;"></div>
<svg style="left:7px;top:608px" width="15" height="14" viewBox="7 608 15 14"><path d="M8.8 610L19.8 619.8M19.8 610L8.8 619.8" stroke="#151515" stroke-width="2.4" fill="none"/></svg>
<span class="t" style="left:37.21px;top:610px;font-size:18.3px;transform:scaleX(0.9381);color:#1c1c1c;">Time</span>
<span class="t" style="left:297.44px;top:610px;font-size:18.3px;transform:scaleX(0.9933);color:#1c1c1c;">Order</span>
<span class="t" style="left:408.26px;top:610px;font-size:18.3px;transform:scaleX(1.0091);color:#1c1c1c;">Symbol</span>
<span class="t" style="left:526.33px;top:610px;font-size:18.3px;transform:scaleX(0.9098);color:#1c1c1c;">Type</span>
<span class="t" style="left:659.72px;top:610px;font-size:18.3px;transform:scaleX(0.9566);color:#1c1c1c;">Volume</span>
<span class="t" style="left:837.43px;top:610px;font-size:18.3px;transform:scaleX(0.9117);color:#1c1c1c;">Price</span>
<span class="t" style="left:995.21px;top:610px;font-size:18.3px;transform:scaleX(0.9476);color:#1c1c1c;">S / L</span>
<span class="t" style="left:1150.81px;top:610px;font-size:18.3px;transform:scaleX(0.9474);color:#1c1c1c;">T / P</span>
<span class="t" style="left:1329.11px;top:610px;font-size:18.3px;transform:scaleX(0.9381);color:#1c1c1c;">Time</span>
<span class="t" style="left:1452.42px;top:610px;font-size:18.3px;transform:scaleX(0.9444);color:#1c1c1c;">State</span>
<span class="t" style="left:1780.57px;top:610px;font-size:18.3px;transform:scaleX(1.0005);color:#1c1c1c;">Comment</span>
<div class="b" style="left:29px;top:633px;width:1837px;height:323px;overflow:hidden">
<div class="b" style="left:-29px;top:-633px;width:0;height:0"><div class="b" style="left:31px;top:633px;width:1835px;height:29px;background:#0078d7;"></div>
<div class="b" style="left:29px;top:662px;width:1837px;height:1px;background:#d3d3d3;"></div>
<span class="t" style="left:62.92px;top:640px;font-size:18.3px;transform:scaleX(0.9609);color:#fff;">2025.01.08 17:28:41</span>
<span class="t" style="left:334.60px;top:640px;font-size:18.3px;transform:scaleX(0.9720);color:#fff;">2</span>
<span class="t" style="left:397.20px;top:640px;font-size:18.3px;transform:scaleX(0.9775);color:#fff;">xauusdm</span>
<span class="t" style="left:538.02px;top:640px;font-size:18.3px;transform:scaleX(0.9368);color:#fff;">sell</span>
<span class="t" style="left:633.90px;top:640px;font-size:18.3px;transform:scaleX(0.9804);color:#fff;">0.03 / 0.03</span>
<span class="t" style="left:819.09px;top:640px;font-size:18.3px;transform:scaleX(0.9967);color:#fff;">market</span>
<span class="t" style="left:956.50px;top:640px;font-size:18.3px;transform:scaleX(0.9737);color:#fff;">2667.944</span>
<span class="t" style="left:1112.70px;top:640px;font-size:18.3px;transform:scaleX(0.9737);color:#fff;">2654.944</span>
<span class="t" style="left:1205.01px;top:640px;font-size:18.3px;transform:scaleX(0.9669);color:#fff;">2025.01.08 17:28:41</span>
<span class="t" style="left:1454.43px;top:640px;font-size:18.3px;transform:scaleX(1.0304);color:#fff;">filled</span>
<span class="t" style="left:1762.11px;top:640px;font-size:18.3px;transform:scaleX(0.9477);color:#fff;">Sell MA+RSI</span>
<svg style="left:36px;top:633px" width="20" height="30" viewBox="36 633 20 30"><path d="M41.6 637.6H49.9a3 3 0 0 1 3 3V652.6L47.7 657.8H41.6a3 3 0 0 1 -3 -3V640.6a3 3 0 0 1 3 -3Z" fill="#fff" stroke="#d63a2f" stroke-width="2"/><path d="M54 651.1C49 651.4 46.9 653.6 46.7 658.9Z" fill="#d63a2f"/><path d="M43.2 642.8H48.4M43.2 647.3H48" stroke="#d63a2f" stroke-width="1.9" fill="none"/></svg>
<div class="b" style="left:29px;top:663px;width:1837px;height:29px;background:#ebebeb;"></div>
<div class="b" style="left:29px;top:692px;width:1837px;height:1px;background:#d3d3d3;"></div>
<div class="b" style="left:725px;top:663px;width:155px;height:29px;background:#60ea60;"></div>
<span class="t" style="left:62.92px;top:670px;font-size:18.3px;transform:scaleX(0.9607);color:#1c1c1c;">2025.01.08 17:37:29</span>
<span class="t" style="left:334.49px;top:670px;font-size:18.3px;transform:scaleX(0.9720);color:#1c1c1c;">3</span>
<span class="t" style="left:397.20px;top:670px;font-size:18.3px;transform:scaleX(0.9775);color:#1c1c1c;">xauusdm</span>
<span class="t" style="left:532.18px;top:670px;font-size:18.3px;transform:scaleX(1.0322);color:#1c1c1c;">buy</span>
<span class="t" style="left:633.90px;top:670px;font-size:18.3px;transform:scaleX(0.9804);color:#1c1c1c;">0.03 / 0.03</span>
<span class="t" style="left:819.09px;top:670px;font-size:18.3px;transform:scaleX(0.9967);color:#1c1c1c;">market</span>
<span class="t" style="left:1205.01px;top:670px;font-size:18.3px;transform:scaleX(0.9668);color:#1c1c1c;">2025.01.08 17:37:29</span>
<span class="t" style="left:1454.43px;top:670px;font-size:18.3px;transform:scaleX(1.0304);color:#1c1c1c;">filled</span>
<span class="t" style="left:1764.43px;top:670px;font-size:18.3px;transform:scaleX(0.9869);color:#1c1c1c;">tp 2654.944</span>
<svg style="left:36px;top:663px" width="20" height="30" viewBox="36 663 20 30"><path d="M41.6 667.6H49.9a3 3 0 0 1 3 3V682.6L47.7 687.8H41.6a3 3 0 0 1 -3 -3V670.6a3 3 0 0 1 3 -3Z" fill="#fff" stroke="#1767a6" stroke-width="2"/><path d="M54 681.1C49 681.4 46.9 683.6 46.7 688.9Z" fill="#1767a6"/><path d="M43.2 672.8H48.4M43.2 677.3H48" stroke="#1767a6" stroke-width="1.9" fill="none"/></svg>
<div class="b" style="left:29px;top:722px;width:1837px;height:1px;background:#d3d3d3;"></div>
<span class="t" style="left:62.92px;top:700px;font-size:18.3px;transform:scaleX(0.9599);color:#1c1c1c;">2025.01.29 19:33:30</span>
<span class="t" style="left:334.23px;top:700px;font-size:18.3px;transform:scaleX(0.9720);color:#1c1c1c;">4</span>
<span class="t" style="left:397.20px;top:700px;font-size:18.3px;transform:scaleX(0.9775);color:#1c1c1c;">xauusdm</span>
<span class="t" style="left:532.18px;top:700px;font-size:18.3px;transform:scaleX(1.0322);color:#1c1c1c;">buy</span>
<span class="t" style="left:633.90px;top:700px;font-size:18.3px;transform:scaleX(0.9804);color:#1c1c1c;">0.03 / 0.03</span>
<span class="t" style="left:819.09px;top:700px;font-size:18.3px;transform:scaleX(0.9967);color:#1c1c1c;">market</span>
<span class="t" style="left:956.50px;top:700px;font-size:18.3px;transform:scaleX(0.9772);color:#1c1c1c;">2748.916</span>
<span class="t" style="left:1112.70px;top:700px;font-size:18.3px;transform:scaleX(0.9772);color:#1c1c1c;">2761.916</span>
<span class="t" style="left:1205.01px;top:700px;font-size:18.3px;transform:scaleX(0.9659);color:#1c1c1c;">2025.01.29 19:33:30</span>
<span class="t" style="left:1454.43px;top:700px;font-size:18.3px;transform:scaleX(1.0304);color:#1c1c1c;">filled</span>
<span class="t" style="left:1759.96px;top:700px;font-size:18.3px;transform:scaleX(0.9591);color:#1c1c1c;">Buy MA+RSI</span>
<svg style="left:36px;top:693px" width="20" height="30" viewBox="36 693 20 30"><path d="M41.6 697.6H49.9a3 3 0 0 1 3 3V712.6L47.7 717.8H41.6a3 3 0 0 1 -3 -3V700.6a3 3 0 0 1 3 -3Z" fill="#fff" stroke="#1767a6" stroke-width="2"/><path d="M54 711.1C49 711.4 46.9 713.6 46.7 718.9Z" fill="#1767a6"/><path d="M43.2 702.8H48.4M43.2 707.3H48" stroke="#1767a6" stroke-width="1.9" fill="none"/></svg>
<div class="b" style="left:29px;top:723px;width:1837px;height:29px;background:#ebebeb;"></div>
<div class="b" style="left:29px;top:752px;width:1837px;height:1px;background:#d3d3d3;"></div>
<div class="b" style="left:725px;top:723px;width:155px;height:29px;background:#ff9f9f;"></div>
<span class="t" style="left:62.92px;top:730px;font-size:18.3px;transform:scaleX(0.9611);color:#1c1c1c;">2025.01.29 19:35:27</span>
<span class="t" style="left:334.45px;top:730px;font-size:18.3px;transform:scaleX(0.9720);color:#1c1c1c;">5</span>
<span class="t" style="left:397.20px;top:730px;font-size:18.3px;transform:scaleX(0.9775);color:#1c1c1c;">xauusdm</span>
<span class="t" style="left:538.02px;top:730px;font-size:18.3px;transform:scaleX(0.9368);color:#1c1c1c;">sell</span>
<span class="t" style="left:633.90px;top:730px;font-size:18.3px;transform:scaleX(0.9804);color:#1c1c1c;">0.03 / 0.03</span>
<span class="t" style="left:819.09px;top:730px;font-size:18.3px;transform:scaleX(0.9967);color:#1c1c1c;">market</span>
<span class="t" style="left:1205.01px;top:730px;font-size:18.3px;transform:scaleX(0.9671);color:#1c1c1c;">2025.01.29 19:35:27</span>
<span class="t" style="left:1454.43px;top:730px;font-size:18.3px;transform:scaleX(1.0304);color:#1c1c1c;">filled</span>
<span class="t" style="left:1769.11px;top:730px;font-size:18.3px;transform:scaleX(0.9613);color:#1c1c1c;">sl 2748.916</span>
<svg style="left:36px;top:723px" width="20" height="30" viewBox="36 723 20 30"><path d="M41.6 727.6H49.9a3 3 0 0 1 3 3V742.6L47.7 747.8H41.6a3 3 0 0 1 -3 -3V730.6a3 3 0 0 1 3 -3Z" fill="#fff" stroke="#d63a2f" stroke-width="2"/><path d="M54 741.1C49 741.4 46.9 743.6 46.7 748.9Z" fill="#d63a2f"/><path d="M43.2 732.8H48.4M43.2 737.3H48" stroke="#d63a2f" stroke-width="1.9" fill="none"/></svg>
<div class="b" style="left:29px;top:782px;width:1837px;height:1px;background:#d3d3d3;"></div>
<span class="t" style="left:62.92px;top:760px;font-size:18.3px;transform:scaleX(0.9607);color:#1c1c1c;">2025.01.29 19:38:29</span>
<span class="t" style="left:334.49px;top:760px;font-size:18.3px;transform:scaleX(0.9720);color:#1c1c1c;">6</span>
<span class="t" style="left:397.20px;top:760px;font-size:18.3px;transform:scaleX(0.9775);color:#1c1c1c;">xauusdm</span>
<span class="t" style="left:532.18px;top:760px;font-size:18.3px;transform:scaleX(1.0322);color:#1c1c1c;">buy</span>
<span class="t" style="left:633.90px;top:760px;font-size:18.3px;transform:scaleX(0.9804);color:#1c1c1c;">0.03 / 0.03</span>
<span class="t" style="left:819.09px;top:760px;font-size:18.3px;transform:scaleX(0.9967);color:#1c1c1c;">market</span>
<span class="t" style="left:956.50px;top:760px;font-size:18.3px;transform:scaleX(0.9787);color:#1c1c1c;">2748.907</span>
<span class="t" style="left:1112.70px;top:760px;font-size:18.3px;transform:scaleX(0.9787);color:#1c1c1c;">2761.907</span>
<span class="t" style="left:1205.01px;top:760px;font-size:18.3px;transform:scaleX(0.9668);color:#1c1c1c;">2025.01.29 19:38:29</span>
<span class="t" style="left:1454.43px;top:760px;font-size:18.3px;transform:scaleX(1.0304);color:#1c1c1c;">filled</span>
<span class="t" style="left:1759.96px;top:760px;font-size:18.3px;transform:scaleX(0.9591);color:#1c1c1c;">Buy MA+RSI</span>
<svg style="left:36px;top:753px" width="20" height="30" viewBox="36 753 20 30"><path d="M41.6 757.6H49.9a3 3 0 0 1 3 3V772.6L47.7 777.8H41.6a3 3 0 0 1 -3 -3V760.6a3 3 0 0 1 3 -3Z" fill="#fff" stroke="#1767a6" stroke-width="2"/><path d="M54 771.1C49 771.4 46.9 773.6 46.7 778.9Z" fill="#1767a6"/><path d="M43.2 762.8H48.4M43.2 767.3H48" stroke="#1767a6" stroke-width="1.9" fill="none"/></svg>
<div class="b" style="left:29px;top:783px;width:1837px;height:29px;background:#ebebeb;"></div>
<div class="b" style="left:29px;top:812px;width:1837px;height:1px;background:#d3d3d3;"></div>
<div class="b" style="left:725px;top:783px;width:155px;height:29px;background:#60ea60;"></div>
<span class="t" style="left:62.92px;top:790px;font-size:18.3px;transform:scaleX(0.9603);color:#1c1c1c;">2025.01.30 00:31:38</span>
<span class="t" style="left:334.60px;top:790px;font-size:18.3px;transform:scaleX(0.9720);color:#1c1c1c;">7</span>
<span class="t" style="left:397.20px;top:790px;font-size:18.3px;transform:scaleX(0.9775);color:#1c1c1c;">xauusdm</span>
<span class="t" style="left:538.02px;top:790px;font-size:18.3px;transform:scaleX(0.9368);color:#1c1c1c;">sell</span>
<span class="t" style="left:633.90px;top:790px;font-size:18.3px;transform:scaleX(0.9804);color:#1c1c1c;">0.03 / 0.03</span>
<span class="t" style="left:819.09px;top:790px;font-size:18.3px;transform:scaleX(0.9967);color:#1c1c1c;">market</span>
<span class="t" style="left:1205.01px;top:790px;font-size:18.3px;transform:scaleX(0.9664);color:#1c1c1c;">2025.01.30 00:31:38</span>
<span class="t" style="left:1454.43px;top:790px;font-size:18.3px;transform:scaleX(1.0304);color:#1c1c1c;">filled</span>
<span class="t" style="left:1764.43px;top:790px;font-size:18.3px;transform:scaleX(0.9908);color:#1c1c1c;">tp 2761.907</span>
<svg style="left:36px;top:783px" width="20" height="30" viewBox="36 783 20 30"><path d="M41.6 787.6H49.9a3 3 0 0 1 3 3V802.6L47.7 807.8H41.6a3 3 0 0 1 -3 -3V790.6a3 3 0 0 1 3 -3Z" fill="#fff" stroke="#d63a2f" stroke-width="2"/><path d="M54 801.1C49 801.4 46.9 803.6 46.7 808.9Z" fill="#d63a2f"/><path d="M43.2 792.8H48.4M43.2 797.3H48" stroke="#d63a2f" stroke-width="1.9" fill="none"/></svg>
<div class="b" style="left:29px;top:842px;width:1837px;height:1px;background:#d3d3d3;"></div>
<span class="t" style="left:62.92px;top:820px;font-size:18.3px;transform:scaleX(0.9609);color:#1c1c1c;">2025.01.30 12:04:01</span>
<span class="t" style="left:334.48px;top:820px;font-size:18.3px;transform:scaleX(0.9720);color:#1c1c1c;">8</span>
<span class="t" style="left:397.20px;top:820px;font-size:18.3px;transform:scaleX(0.9775);color:#1c1c1c;">xauusdm</span>
<span class="t" style="left:538.02px;top:820px;font-size:18.3px;transform:scaleX(0.9368);color:#1c1c1c;">sell</span>
<span class="t" style="left:633.90px;top:820px;font-size:18.3px;transform:scaleX(0.9804);color:#1c1c1c;">0.03 / 0.03</span>
<span class="t" style="left:819.09px;top:820px;font-size:18.3px;transform:scaleX(0.9967);color:#1c1c1c;">market</span>
<span class="t" style="left:956.50px;top:820px;font-size:18.3px;transform:scaleX(0.9760);color:#1c1c1c;">2779.430</span>
<span class="t" style="left:1112.70px;top:820px;font-size:18.3px;transform:scaleX(0.9760);color:#1c1c1c;">2766.430</span>
<span class="t" style="left:1205.01px;top:820px;font-size:18.3px;transform:scaleX(0.9669);color:#1c1c1c;">2025.01.30 12:04:01</span>
<span class="t" style="left:1454.43px;top:820px;font-size:18.3px;transform:scaleX(1.0304);color:#1c1c1c;">filled</span>
<span class="t" style="left:1762.11px;top:820px;font-size:18.3px;transform:scaleX(0.9477);color:#1c1c1c;">Sell MA+RSI</span>
<svg style="left:36px;top:813px" width="20" height="30" viewBox="36 813 20 30"><path d="M41.6 817.6H49.9a3 3 0 0 1 3 3V832.6L47.7 837.8H41.6a3 3 0 0 1 -3 -3V820.6a3 3 0 0 1 3 -3Z" fill="#fff" stroke="#d63a2f" stroke-width="2"/><path d="M54 831.1C49 831.4 46.9 833.6 46.7 838.9Z" fill="#d63a2f"/><path d="M43.2 822.8H48.4M43.2 827.3H48" stroke="#d63a2f" stroke-width="1.9" fill="none"/></svg>
<div class="b" style="left:29px;top:843px;width:1837px;height:29px;background:#ebebeb;"></div>
<div class="b" style="left:29px;top:872px;width:1837px;height:1px;background:#d3d3d3;"></div>
<div class="b" style="left:725px;top:843px;width:155px;height:29px;background:#ff9f9f;"></div>
<span class="t" style="left:62.92px;top:850px;font-size:18.3px;transform:scaleX(0.9607);color:#1c1c1c;">2025.01.30 12:35:29</span>
<span class="t" style="left:334.55px;top:850px;font-size:18.3px;transform:scaleX(0.9720);color:#1c1c1c;">9</span>
<span class="t" style="left:397.20px;top:850px;font-size:18.3px;transform:scaleX(0.9775);color:#1c1c1c;">xauusdm</span>
<span class="t" style="left:532.18px;top:850px;font-size:18.3px;transform:scaleX(1.0322);color:#1c1c1c;">buy</span>
<span class="t" style="left:633.90px;top:850px;font-size:18.3px;transform:scaleX(0.9804);color:#1c1c1c;">0.03 / 0.03</span>
<span class="t" style="left:819.09px;top:850px;font-size:18.3px;transform:scaleX(0.9967);color:#1c1c1c;">market</span>
<span class="t" style="left:1205.01px;top:850px;font-size:18.3px;transform:scaleX(0.9668);color:#1c1c1c;">2025.01.30 12:35:29</span>
<span class="t" style="left:1454.43px;top:850px;font-size:18.3px;transform:scaleX(1.0304);color:#1c1c1c;">filled</span>
<span class="t" style="left:1769.11px;top:850px;font-size:18.3px;transform:scaleX(0.9604);color:#1c1c1c;">sl 2779.430</span>
<svg style="left:36px;top:843px" width="20" height="30" viewBox="36 843 20 30"><path d="M41.6 847.6H49.9a3 3 0 0 1 3 3V862.6L47.7 867.8H41.6a3 3 0 0 1 -3 -3V850.6a3 3 0 0 1 3 -3Z" fill="#fff" stroke="#1767a6" stroke-width="2"/><path d="M54 861.1C49 861.4 46.9 863.6 46.7 868.9Z" fill="#1767a6"/><path d="M43.2 852.8H48.4M43.2 857.3H48" stroke="#1767a6" stroke-width="1.9" fill="none"/></svg>
<div class="b" style="left:29px;top:902px;width:1837px;height:1px;background:#d3d3d3;"></div>
<span class="t" style="left:62.92px;top:880px;font-size:18.3px;transform:scaleX(0.9602);color:#1c1c1c;">2025.01.30 13:30:15</span>
<span class="t" style="left:324.51px;top:880px;font-size:18.3px;transform:scaleX(0.9720);color:#1c1c1c;">10</span>
<span class="t" style="left:397.20px;top:880px;font-size:18.3px;transform:scaleX(0.9775);color:#1c1c1c;">xauusdm</span>
<span class="t" style="left:538.02px;top:880px;font-size:18.3px;transform:scaleX(0.9368);color:#1c1c1c;">sell</span>
<span class="t" style="left:633.90px;top:880px;font-size:18.3px;transform:scaleX(0.9804);color:#1c1c1c;">0.03 / 0.03</span>
<span class="t" style="left:819.09px;top:880px;font-size:18.3px;transform:scaleX(0.9967);color:#1c1c1c;">market</span>
<span class="t" style="left:956.50px;top:880px;font-size:18.3px;transform:scaleX(0.9737);color:#1c1c1c;">2781.764</span>
<span class="t" style="left:1112.70px;top:880px;font-size:18.3px;transform:scaleX(0.9737);color:#1c1c1c;">2768.764</span>
<span class="t" style="left:1205.01px;top:880px;font-size:18.3px;transform:scaleX(0.9662);color:#1c1c1c;">2025.01.30 13:30:15</span>
<span class="t" style="left:1454.43px;top:880px;font-size:18.3px;transform:scaleX(1.0304);color:#1c1c1c;">filled</span>
<span class="t" style="left:1762.11px;top:880px;font-size:18.3px;transform:scaleX(0.9477);color:#1c1c1c;">Sell MA+RSI</span>
<svg style="left:36px;top:873px" width="20" height="30" viewBox="36 873 20 30"><path d="M41.6 877.6H49.9a3 3 0 0 1 3 3V892.6L47.7 897.8H41.6a3 3 0 0 1 -3 -3V880.6a3 3 0 0 1 3 -3Z" fill="#fff" stroke="#d63a2f" stroke-width="2"/><path d="M54 891.1C49 891.4 46.9 893.6 46.7 898.9Z" fill="#d63a2f"/><path d="M43.2 882.8H48.4M43.2 887.3H48" stroke="#d63a2f" stroke-width="1.9" fill="none"/></svg>
<div class="b" style="left:29px;top:903px;width:1837px;height:29px;background:#ebebeb;"></div>
<div class="b" style="left:29px;top:932px;width:1837px;height:1px;background:#d3d3d3;"></div>
<div class="b" style="left:725px;top:903px;width:155px;height:29px;background:#ff9f9f;"></div>
<span class="t" style="left:62.92px;top:910px;font-size:18.3px;transform:scaleX(0.9609);color:#1c1c1c;">2025.01.30 13:30:41</span>
<span class="t" style="left:324.68px;top:910px;font-size:18.3px;transform:scaleX(0.9720);color:#1c1c1c;">11</span>
<span class="t" style="left:397.20px;top:910px;font-size:18.3px;transform:scaleX(0.9775);color:#1c1c1c;">xauusdm</span>
<span class="t" style="left:532.18px;top:910px;font-size:18.3px;transform:scaleX(1.0322);color:#1c1c1c;">buy</span>
<span class="t" style="left:633.90px;top:910px;font-size:18.3px;transform:scaleX(0.9804);color:#1c1c1c;">0.03 / 0.03</span>
<span class="t" style="left:819.09px;top:910px;font-size:18.3px;transform:scaleX(0.9967);color:#1c1c1c;">market</span>
<span class="t" style="left:1205.01px;top:910px;font-size:18.3px;transform:scaleX(0.9669);color:#1c1c1c;">2025.01.30 13:30:41</span>
<span class="t" style="left:1454.43px;top:910px;font-size:18.3px;transform:scaleX(1.0304);color:#1c1c1c;">filled</span>
<span class="t" style="left:1769.11px;top:910px;font-size:18.3px;transform:scaleX(0.9585);color:#1c1c1c;">sl 2781.764</span>
<svg style="left:36px;top:903px" width="20" height="30" viewBox="36 903 20 30"><path d="M41.6 907.6H49.9a3 3 0 0 1 3 3V922.6L47.7 927.8H41.6a3 3 0 0 1 -3 -3V910.6a3 3 0 0 1 3 -3Z" fill="#fff" stroke="#1767a6" stroke-width="2"/><path d="M54 921.1C49 921.4 46.9 923.6 46.7 928.9Z" fill="#1767a6"/><path d="M43.2 912.8H48.4M43.2 917.3H48" stroke="#1767a6" stroke-width="1.9" fill="none"/></svg>
<div class="b" style="left:29px;top:962px;width:1837px;height:1px;background:#d3d3d3;"></div>
<span class="t" style="left:62.92px;top:940px;font-size:18.3px;transform:scaleX(0.9611);color:#1c1c1c;">2025.01.30 14:36:27</span>
<span class="t" style="left:324.71px;top:940px;font-size:18.3px;transform:scaleX(0.9720);color:#1c1c1c;">12</span>
<span class="t" style="left:397.20px;top:940px;font-size:18.3px;transform:scaleX(0.9775);color:#1c1c1c;">xauusdm</span>
<span class="t" style="left:538.02px;top:940px;font-size:18.3px;transform:scaleX(0.9368);color:#1c1c1c;">sell</span>
<span class="t" style="left:633.90px;top:940px;font-size:18.3px;transform:scaleX(0.9804);color:#1c1c1c;">0.03 / 0.03</span>
<span class="t" style="left:819.09px;top:940px;font-size:18.3px;transform:scaleX(0.9967);color:#1c1c1c;">market</span>
<span class="t" style="left:956.50px;top:940px;font-size:18.3px;transform:scaleX(0.9772);color:#1c1c1c;">2783.883</span>
<span class="t" style="left:1112.70px;top:940px;font-size:18.3px;transform:scaleX(0.9772);color:#1c1c1c;">2770.883</span>
<span class="t" style="left:1205.01px;top:940px;font-size:18.3px;transform:scaleX(0.9671);color:#1c1c1c;">2025.01.30 14:36:27</span>
<span class="t" style="left:1454.43px;top:940px;font-size:18.3px;transform:scaleX(1.0304);color:#1c1c1c;">filled</span>
<span class="t" style="left:1762.11px;top:940px;font-size:18.3px;transform:scaleX(0.9477);color:#1c1c1c;">Sell MA+RSI</span>
<svg style="left:36px;top:933px" width="20" height="30" viewBox="36 933 20 30"><path d="M41.6 937.6H49.9a3 3 0 0 1 3 3V952.6L47.7 957.8H41.6a3 3 0 0 1 -3 -3V940.6a3 3 0 0 1 3 -3Z" fill="#fff" stroke="#d63a2f" stroke-width="2"/><path d="M54 951.1C49 951.4 46.9 953.6 46.7 958.9Z" fill="#d63a2f"/><path d="M43.2 942.8H48.4M43.2 947.3H48" stroke="#d63a2f" stroke-width="1.9" fill="none"/></svg></div></div>
<div class="b" style="left:240px;top:602px;width:1px;height:31px;background:#e3e3e3;"></div>
<div class="b" style="left:240px;top:633px;width:1px;height:323px;background:#d3d3d3;"></div>
<div class="b" style="left:240px;top:633px;width:1px;height:29px;background:rgba(255,255,255,.55);"></div>
<div class="b" style="left:349px;top:602px;width:1px;height:31px;background:#e3e3e3;"></div>
<div class="b" style="left:349px;top:633px;width:1px;height:323px;background:#d3d3d3;"></div>
<div class="b" style="left:349px;top:633px;width:1px;height:29px;background:rgba(255,255,255,.55);"></div>
<div class="b" style="left:474px;top:602px;width:1px;height:31px;background:#e3e3e3;"></div>
<div class="b" style="left:474px;top:633px;width:1px;height:323px;background:#d3d3d3;"></div>
<div class="b" style="left:474px;top:633px;width:1px;height:29px;background:rgba(255,255,255,.55);"></div>
<div class="b" style="left:568px;top:602px;width:1px;height:31px;background:#e3e3e3;"></div>
<div class="b" style="left:568px;top:633px;width:1px;height:323px;background:#d3d3d3;"></div>
<div class="b" style="left:568px;top:633px;width:1px;height:29px;background:rgba(255,255,255,.55);"></div>
<div class="b" style="left:724px;top:602px;width:1px;height:31px;background:#e3e3e3;"></div>
<div class="b" style="left:724px;top:633px;width:1px;height:323px;background:#d3d3d3;"></div>
<div class="b" style="left:724px;top:633px;width:1px;height:29px;background:rgba(255,255,255,.55);"></div>
<div class="b" style="left:880px;top:602px;width:1px;height:31px;background:#e3e3e3;"></div>
<div class="b" style="left:880px;top:633px;width:1px;height:323px;background:#d3d3d3;"></div>
<div class="b" style="left:880px;top:633px;width:1px;height:29px;background:rgba(255,255,255,.55);"></div>
<div class="b" style="left:1036px;top:602px;width:1px;height:31px;background:#e3e3e3;"></div>
<div class="b" style="left:1036px;top:633px;width:1px;height:323px;background:#d3d3d3;"></div>
<div class="b" style="left:1036px;top:633px;width:1px;height:29px;background:rgba(255,255,255,.55);"></div>
<div class="b" style="left:1192px;top:602px;width:1px;height:31px;background:#e3e3e3;"></div>
<div class="b" style="left:1192px;top:633px;width:1px;height:323px;background:#d3d3d3;"></div>
<div class="b" style="left:1192px;top:633px;width:1px;height:29px;background:rgba(255,255,255,.55);"></div>
<div class="b" style="left:1372px;top:602px;width:1px;height:31px;background:#e3e3e3;"></div>
<div class="b" style="left:1372px;top:633px;width:1px;height:323px;background:#d3d3d3;"></div>
<div class="b" style="left:1372px;top:633px;width:1px;height:29px;background:rgba(255,255,255,.55);"></div>
<div class="b" style="left:1497px;top:602px;width:1px;height:31px;background:#e3e3e3;"></div>
<div class="b" style="left:1497px;top:633px;width:1px;height:323px;background:#d3d3d3;"></div>
<div class="b" style="left:1497px;top:633px;width:1px;height:29px;background:rgba(255,255,255,.55);"></div>
<div class="b" style="left:1866px;top:602px;width:26px;height:355px;background:#f0f0f0;"></div>
<div class="b" style="left:1876px;top:629px;width:6px;height:29px;background:#8b8b8b;border-radius:3px;"></div>
<div class="b" style="left:29px;top:956px;width:1863px;height:35px;background:#f0f0f0;"></div>
<div class="b" style="left:31px;top:956px;width:1861px;height:1px;background:#000;"></div>
<div class="b" style="left:108px;top:956px;width:87px;height:30px;background:#fff;border:1px solid #000;border-top:none;box-sizing:border-box;"></div>
<span class="t" style="left:51.44px;top:963px;font-size:18.3px;transform:scaleX(0.8759);color:#7a7a7a;">Trade</span>
<span class="t" style="left:122.39px;top:963px;font-size:18.3px;transform:scaleX(1.0072);color:#1c1c1c;">History</span>
<span class="t" style="left:209.65px;top:963px;font-size:18.3px;transform:scaleX(0.9854);color:#7a7a7a;">Operations</span>
<div class="b" style="left:313px;top:960px;width:1px;height:25px;background:#707070;"></div>
<span class="t" style="left:327.53px;top:963px;font-size:18.3px;transform:scaleX(0.9537);color:#7a7a7a;">Journal</span>
<div class="b" style="left:17.9px;top:985.3px;width:0;height:0;transform:rotate(-90deg);transform-origin:0 0"><span class="t" style="left:-0.38px;top:-15px;font-size:18.3px;transform:scaleX(0.9194);color:#101010">Toolbox</span></div>
</div>
</body></html>
